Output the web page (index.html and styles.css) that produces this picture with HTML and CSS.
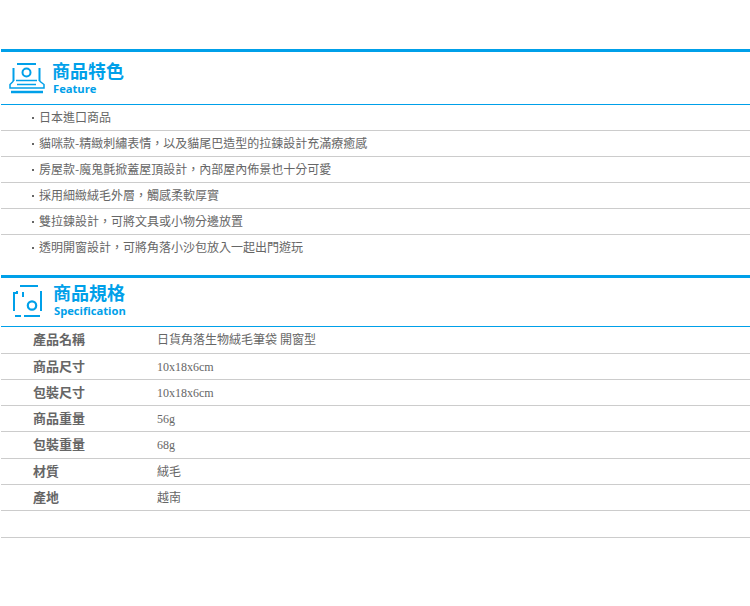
FILE: index.html
```html
<!DOCTYPE html>
<html lang="zh-Hant">
<head>
<meta charset="utf-8">
<title>商品資訊</title>
<link rel="stylesheet" href="styles.css">
</head>
<body>
<section class="block block-feature">
  <header class="head head-feature">
    <svg class="icon icon-feature" width="36" height="32" viewBox="0 0 36 32" fill="none" stroke="#00a0e9" stroke-width="2">
      <path d="M8 2H27"/>
      <path d="M4.500 6V19M30.500 6V19"/>
      <circle cx="17.500" cy="10.500" r="4"/>
      <path d="M7 18.500H28" stroke-width="1.500"/>
      <path d="M4.500 19L1 22.500V26H35V22.500L30.500 19" stroke-width="1.500"/>
      <path d="M8 22.500H27" stroke-width="1.500"/>
      <path d="M2 30H34" stroke-width="2.500"/>
    </svg>
    <div class="titles">
      <h2 class="title">商品特色</h2>
      <p class="subtitle">Feature</p>
    </div>
  </header>
  <ul class="features">
    <li class="feature">日本進口商品</li>
    <li class="feature">貓咪款-精緻刺繡表情，以及貓尾巴造型的拉鍊設計充滿療癒感</li>
    <li class="feature">房屋款-魔鬼氈掀蓋屋頂設計，內部屋內佈景也十分可愛</li>
    <li class="feature">採用細緻絨毛外層，觸感柔軟厚實</li>
    <li class="feature">雙拉鍊設計，可將文具或小物分邊放置</li>
    <li class="feature feature-last">透明開窗設計，可將角落小沙包放入一起出門遊玩</li>
  </ul>
</section>
<section class="block block-spec">
  <header class="head head-spec">
    <svg class="icon icon-spec" width="30" height="34" viewBox="0 0 30 34" fill="none" stroke="#00a0e9" stroke-width="2">
      <path d="M7 2H25"/>
      <path d="M1 27V9H4V7M28 7V27"/>
      <path d="M10 8V13"/>
      <circle cx="19" cy="21.500" r="4.200" stroke-width="2.200"/>
      <path d="M2 32H8M11 32H27"/>
    </svg>
    <div class="titles">
      <h2 class="title">商品規格</h2>
      <p class="subtitle">Specification</p>
    </div>
  </header>
  <dl class="specs">
    <div class="spec spec-tall"><dt class="spec-name">產品名稱</dt><dd class="spec-value">日貨角落生物絨毛筆袋 開窗型</dd></div>
    <div class="spec"><dt class="spec-name">商品尺寸</dt><dd class="spec-value">10x18x6cm</dd></div>
    <div class="spec"><dt class="spec-name">包裝尺寸</dt><dd class="spec-value">10x18x6cm</dd></div>
    <div class="spec"><dt class="spec-name">商品重量</dt><dd class="spec-value">56g</dd></div>
    <div class="spec spec-tall"><dt class="spec-name">包裝重量</dt><dd class="spec-value">68g</dd></div>
    <div class="spec"><dt class="spec-name">材質</dt><dd class="spec-value">絨毛</dd></div>
    <div class="spec"><dt class="spec-name">產地</dt><dd class="spec-value">越南</dd></div>
    <div class="spec spec-tall"></div>
  </dl>
</section>
</body>
</html>
```
FILE: styles.css
```css
* { box-sizing: border-box; }
html, body { margin: 0; padding: 0; background: #fff; }
body {
  padding: 49px 0 0 1px;
  font-family: "Liberation Serif", "Noto Sans CJK TC", serif;
  font-size: 12px;
  color: #666;
}
.block { display: block; }
.block-spec { margin-top: 14px; }
.head {
  display: flex;
  align-items: flex-start;
  border-top: 3px solid #00a0e9;
  border-bottom: 1px solid #00a0e9;
}
.head-feature { height: 56px; padding: 8px 0 0 8px; gap: 8px; }
.head-spec { height: 52px; padding: 4px 0 0 12px; gap: 11px; }
.icon { margin-top: 2px; flex: none; }
.titles { display: flex; flex-direction: column; }
.title {
  margin: 0 0 0 -1px;
  font-family: "Noto Sans CJK TC", sans-serif;
  font-size: 18px;
  line-height: 20px;
  font-weight: 700;
  color: #00a0e9;
}
.subtitle {
  margin: 0;
  font-family: "Open Sans", "Liberation Sans", sans-serif;
  font-size: 11.2px;
  line-height: 17px;
  font-weight: 700;
  color: #00a0e9;
}
.features { margin: 0; padding: 0; list-style: none; }
.feature {
  height: 26px;
  padding-left: 28px;
  line-height: 23px;
  border-bottom: 1px solid #ccc;
  font-family: "Noto Sans CJK TC", sans-serif;
  white-space: nowrap;
}
.feature::before {
  content: "";
  display: inline-block;
  width: 2px;
  height: 2px;
  margin: 0 5px 2px 3px;
  vertical-align: middle;
  background: #666;
}
.feature-last { border-bottom: 0; }
.specs { margin: 0; }
.spec {
  display: grid;
  grid-template-columns: 124px 1fr;
  height: 26px;
  padding-left: 32px;
  line-height: 25px;
  border-bottom: 1px solid #ccc;
}
.spec-tall { height: 27px; }
.spec-name {
  font-family: "Noto Sans CJK TC", sans-serif;
  font-size: 13px;
  line-height: 23px;
  font-weight: 700;
}
.spec-value { margin: 0; padding-top: 1px; }
```
